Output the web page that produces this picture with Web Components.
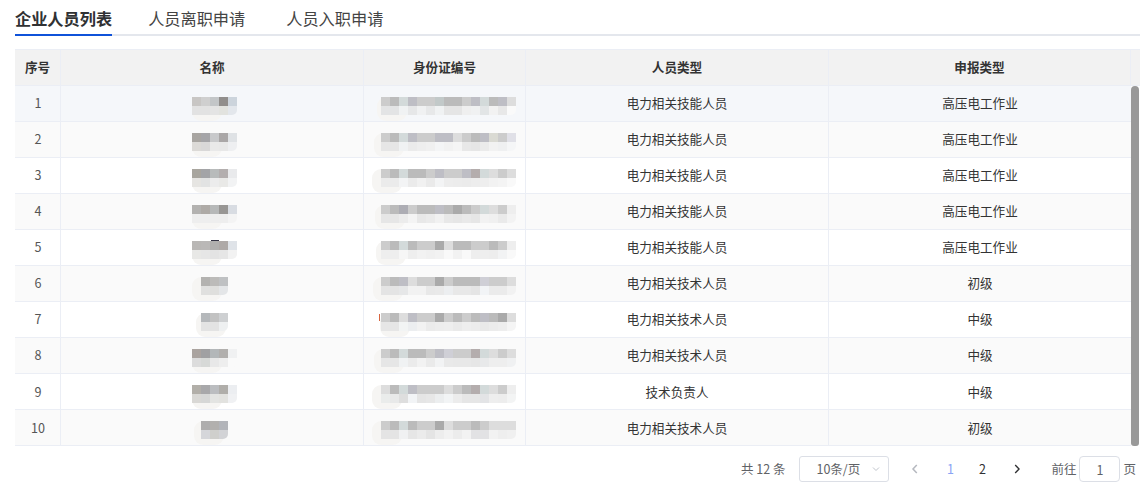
<!DOCTYPE html>
<html lang="zh">
<head>
<meta charset="utf-8">
<title>企业人员列表</title>
<style>
  html, body { margin: 0; background: #fff; }
  body {
    padding: 0 8px 0 15px;
    font-family: "Noto Sans CJK SC", "Liberation Sans", sans-serif;
    font-size: 12.6px;
    color: #333;
    overflow: hidden;
  }
</style>
</head>
<body>
<staff-tabs>
  <tab-item active>企业人员列表</tab-item>
  <tab-item>人员离职申请</tab-item>
  <tab-item>人员入职申请</tab-item>
</staff-tabs>
<staff-table></staff-table>
<staff-pager></staff-pager>

<script>
class TabItem extends HTMLElement {
    connectedCallback() {
        this.attachShadow({ mode: 'open' });
        this.shadowRoot.innerHTML = `
            <style>
                :host {
                    display: block;
                    height: 36px;
                    box-sizing: border-box;
                    padding-top: 6px;
                    font-size: 16.2px;
                    line-height: 24px;
                    color: #444;
                    border-bottom: 2px solid transparent;
                }
                :host([active]) {
                    font-weight: 700;
                    color: #303133;
                    border-bottom-color: #0f52d9;
                }
            </style>
            <slot></slot>
        `;
    }
}

class StaffTabs extends HTMLElement {
    connectedCallback() {
        this.attachShadow({ mode: 'open' });
        this.shadowRoot.innerHTML = `
            <style>
                :host {
                    display: flex;
                    gap: 36px;
                    height: 36px;
                    border-bottom: 2px solid #e4e7ed;
                    box-sizing: border-box;
                }
                ::slotted(tab-item:nth-child(3)) { margin-left: 5px; }
            </style>
            <slot></slot>
        `;
    }
}

// pixelated (redacted) block: two rows of 9px squares, with a pale halo behind
class BlurMask extends HTMLElement {
    connectedCallback() {
        const top = this.getAttribute('top').split(' ');
        const bottom = this.getAttribute('bottom').split(' ');
        const halo = this.getAttribute('halo') || 0;
        const speck = this.getAttribute('speck');
        const cells = list => list.map(c => `<i style="background:#${c}"></i>`).join('');
        let speckHtml = '';
        if (speck) {
            const [x, y, w, h, color] = speck.split(',');
            speckHtml = `<b style="left:${x}px;top:${y}px;width:${w}px;height:${h}px;background:#${color}"></b>`;
        }
        this.attachShadow({ mode: 'open' });
        this.shadowRoot.innerHTML = `
            <style>
                :host {
                    display: grid;
                    grid-template-rows: 9px 9px;
                    width: max-content;
                    position: relative;
                }
                .row { display: flex; position: relative; }
                i { display: block; width: 9px; height: 9px; }
                b { position: absolute; display: block; }
                .row:first-of-type i:last-child { border-top-right-radius: 5px; }
                .row:last-of-type i:last-child { border-bottom-right-radius: 5px; }
                .halo {
                    position: absolute;
                    top: 0;
                    bottom: 0;
                    left: -${halo}px;
                    width: 30px;
                    border-radius: 9px;
                    background: #f6f5f3;
                }
            </style>
            ${halo ? '<div class="halo"></div>' : ''}
            <div class="row">${cells(top)}</div>
            <div class="row">${cells(bottom)}</div>
            ${speckHtml}
        `;
    }
}

class StaffRow extends HTMLElement {
    connectedCallback() {
        this.attachShadow({ mode: 'open' });
        this.shadowRoot.innerHTML = `
            <style>
                :host {
                    display: grid;
                    grid-template-columns: 46px 303px 162px 303px 302px;
                    height: 36px;
                    box-sizing: border-box;
                    border-bottom: 1px solid #ebeef5;
                    background: var(--row-bg, #fff);
                    line-height: 33px;
                    text-align: center;
                    color: #333;
                }
                :host([striped]) { --row-bg: #fafafa; }
                :host([hover]) { --row-bg: #f5f7fa; }
                :host([low]) { line-height: 35px; }
                .c { border-right: 1px solid #ebeef5; min-width: 0; }
                .c:last-child { border-right: 0; }
                .no { color: #555; padding-left: 1px; box-sizing: border-box; }
                .mask { padding-top: 11px; box-sizing: border-box; display: flex; justify-content: center; }
                .name { padding-left: 5px; }
                .id { padding-left: 8px; }
            </style>
            <div class="c no">${this.getAttribute('no')}</div>
            <div class="c mask name"><slot name="name"></slot></div>
            <div class="c mask id"><slot name="id"></slot></div>
            <div class="c">${this.getAttribute('kind')}</div>
            <div class="c">${this.getAttribute('level')}</div>
        `;
    }
}

const KIND_SKILL = '电力相关技能人员';
const KIND_TECH = '电力相关技术人员';
const ROWS = [
    { kind: KIND_SKILL, level: '高压电工作业',
      nt: 'c8c6c4 cfcfcf c3c6c8 918e8c ccd4dc', nb: 'e2e2e2 e2e2e2 e4e4e4 e2e3df e3e7ec', nh: 0,
      it: 'ccc bbb cdd bbc ccc ccc bcc bbb bbb ccc bbc cdd bbb bbc ddd', ib: 'e3e4e5 e3e4e5 f0f2f3 e6e7e8 f0f1f2 e7e8e9 f0f2f3 e5e5e5 e5e5e5 efefef f0f1f2 e2e5e6 f2f2f2 e8e8e8 fafafa', ih: 4 },
    { kind: KIND_SKILL, level: '高压电工作业',
      nt: 'a8a5a1 a5a5a8 c8c9cb aaa7a7 dfe2e5', nb: 'dcdad7 d9d8d8 e9e9e9 e8e8e8 eeeff1', nh: 0,
      it: 'ccc bbb cdd bbc ccc ccc bbc bbc ddd ccc bbb bbc ddc ccc dde', ib: 'e6e6e6 e6e6e6 f0f2f3 ebebeb eeeeee f0f0f0 f4f5f6 f2f2f2 f5f5f5 e8e8e8 e6e6e6 ebebeb f2f2f2 eff0f1 f5f6f7', ih: 7 },
    { kind: KIND_SKILL, level: '高压电工作业',
      nt: 'a8a59e a3a4a7 b8bbbb b3aeae e9eaec', nb: 'e6e5e2 e2e3e3 ececec e9e9e7 f2f3f4', nh: 0,
      it: 'ccc bbb cdd bbb bbb ccc bbc ccc ccc bbc baa cdd ddd ccc ddd', ib: 'ebebeb ebebeb f3f4f5 ebebeb f1f1f1 eaeaea f3f4f5 ededed ececec ebebeb ededed eeeeee f2f2f2 f4f4f4 f9f9f9', ih: 9 },
    { kind: KIND_SKILL, level: '高压电工作业',
      nt: 'b3b2b0 aeaaa6 b6b8b8 989694 d8dce2', nb: 'eeeeee eeeeee eeeeee eeeeee f4f4f4', nh: 0,
      it: 'ccc bbb aab ccc bbb bbb bbc bbb aaa bbb ccc cdd ddd ccc eee', ib: 'e6e6e6 e6e6e6 ececec f4f4f4 e8e8e8 ebebeb f1f1f1 e8e8e8 e6e6e6 e9e9e9 e6e6e6 f2f2f2 f0f0f0 eaeaea f3f3f3', ih: 6 },
    { kind: KIND_SKILL, level: '高压电工作业',
      nt: 'b9b7b5 bab8b7 b0afae aea9a7 dfe3e8', nb: 'e8e8e6 e6e6e6 e3e3e3 e6e6e6 f2f2f2', nh: 0, ns: '19,-1,8,1,334',
      it: 'ccc bbb cdd bbb ccc ccc aaa ddd bbb bbb ccc ccc bbb ccc eee', ib: 'eeeeee eeeeee f6f6f6 eeeeee f2f2f2 f0f0f0 f2f2f2 f9f9f9 f2f2f2 f9f9f9 eeeeee eeeeee ededed f2f3f4 f9f9f9', ih: 5 },
    { kind: KIND_TECH, level: '初级',
      nt: 'b3b2b0 bcbbb9 bfc1c3', nb: 'e0e0df dfdfdd e4e6e8', nh: 9,
      it: 'ccc bbb bbc ddd ccc ccc aaa ccc bbb bbb bbb ccd ccc ccc ddd', ib: 'e4e4e4 e4e4e4 e6e7e8 f2f2f2 f2f2f2 e8e8e8 e9e9e9 eceef0 e8e8e8 e8e8e8 e5e5e5 f2f4f6 ebebeb ebebeb f2f2f2', ih: 8 },
    { kind: KIND_TECH, level: '中级',
      nt: 'b5b8bb c2c2c2 ced0d2', nb: 'e3e3e3 e3e3e3 eef0f1', nh: 5, is: '-2,1,1,7,d9653f',
      it: 'ccc bbb ddd bbc ccc ccc aaa ccc bbb ccc bbb bbc bbb aaa ddd', ib: 'e6e6e6 e6e6e6 f2f4f4 eceef0 f2f2f2 ebebeb ededed eeeeee eaeaea eeeeee ececec e9e9e9 ececec eeeeee f5f5f5', ih: 1 },
    { kind: KIND_TECH, level: '中级',
      nt: 'aaa39f a0a0a2 b3b7b9 b1afad f0f1f2', nb: 'dcdcdc d7d9d7 e8e8e8 eeeeee fafafa', nh: 0,
      it: 'ccc bbb cdd bbb bbb ccc bbc ccd ccc ccc baa cdd ddd ccc ddd', ib: 'e6e6e6 e6e6e6 f0f2f3 ebebeb f2f2f2 eaeaea f2f3f4 e9e9e9 e8e8e8 e8e8e8 e6e6e6 e8e9ea eeeeee eeeeee f0f1f2', ih: 7 },
    { kind: '技术负责人', level: '中级',
      nt: 'b2afa9 a8a8aa bbbdc0 b0aeaa eceef1', nb: 'd9d8d5 d6d7d6 e3e4e2 e2e2df f0f1f3', nh: 0,
      it: 'ddd bbb cdd bbc ccc ccc ccc ddd ccc bbb baa cdd ddd ccc eee', ib: 'eaeceb e8e9e9 dedede f2f4f6 e5e5e5 e7e7e7 eceeef f2f4f5 ececec e6e6e6 e6e6e6 e3e4e6 eeeeee ededed f3f4f4', ih: 9 },
    { kind: KIND_TECH, level: '初级',
      nt: 'aeadad b2b0ae b2b4b9', nb: 'd5d6da cfcfcc d2d3d6', nh: 7,
      it: 'ccc bbb cdd bbb ccc ccc aaa ddd ccc ccc bbb ccc ddd ddd ddd', ib: 'e4e4e4 e4e4e4 f0f1f2 e6e6e6 ebebeb e4e4e4 ededed f2f2f2 ececec f2f2f2 e2e2e4 e2e2e4 f2f2f2 eeeeee f0f0f0', ih: 9 },
];

class StaffTable extends HTMLElement {
    connectedCallback() {
        const rows = ROWS.map((r, i) => {
            const n = i + 1;
            const attr = n === 1 ? 'hover' : (n % 2 === 0 ? 'striped' : '');
            return `
                <staff-row no="${n}" kind="${r.kind}" level="${r.level}" ${attr} ${n > 8 ? 'low' : ''}>
                    <blur-mask slot="name" top="${r.nt}" bottom="${r.nb}" halo="${r.nh}" ${r.ns ? `speck="${r.ns}"` : ''}></blur-mask>
                    <blur-mask slot="id" top="${this.hex(r.it)}" bottom="${r.ib}" halo="${r.ih}" ${r.is ? `speck="${r.is}"` : ''}></blur-mask>
                </staff-row>`;
        }).join('');
        this.attachShadow({ mode: 'open' });
        this.shadowRoot.innerHTML = `
            <style>
                :host {
                    display: block;
                    width: 1125px;
                    margin-top: 13px;
                    border-top: 1px solid #ebeef5;
                    box-sizing: border-box;
                }
                .head {
                    display: grid;
                    grid-template-columns: 46px 303px 162px 303px 302px 9px;
                    height: 35px;
                    background: #f2f2f2;
                    border-bottom: 1px solid #ebeef5;
                    line-height: 33px;
                    text-align: center;
                    font-weight: 700;
                    color: #333;
                }
                .head div { border-right: 1px solid #ebeef5; }
                .head div:last-child { border-right: 0; }
                .body { display: flex; }
                .rows { width: 1116px; }
                .gutter { width: 9px; }
                .thumb { width: 8px; height: 100%; background: #999; border-radius: 4px 4px 3px 3px; }
            </style>
            <div class="head">
                <div>序号</div><div>名称</div><div>身份证编号</div><div>人员类型</div><div>申报类型</div><div></div>
            </div>
            <div class="body">
                <div class="rows">${rows}</div>
                <div class="gutter"><div class="thumb"></div></div>
            </div>
        `;
    }

    // short greys from the table above, with the tint toned down
    hex(list) {
        return list.split(' ').map(c => {
            const v = [...c].map(d => parseInt(d + d, 16));
            const avg = (v[0] + v[1] + v[2]) / 3;
            return v.map(x => Math.round(avg + (x - avg) * 0.4).toString(16).padStart(2, '0')).join('');
        }).join(' ');
    }
}

class StaffPager extends HTMLElement {
    connectedCallback() {
        const chevron = (d, color, w) => `<svg width="8" height="10" viewBox="0 0 8 10" fill="none" stroke="${color}" stroke-width="${w}"><path d="${d}"/></svg>`;
        this.attachShadow({ mode: 'open' });
        this.shadowRoot.innerHTML = `
            <style>
                :host {
                    display: flex;
                    align-items: center;
                    justify-content: flex-end;
                    width: 1121px;
                    height: 26px;
                    margin-top: 10px;
                    font-size: 12.5px;
                    color: #606266;
                }
                .box {
                    box-sizing: border-box;
                    height: 26px;
                    border: 1px solid #dcdfe6;
                    border-radius: 3px;
                    display: flex;
                    align-items: center;
                }
                span, .page, .jump { position: relative; top: -1px; }
                .box.jump { top: 0; border-radius: 4px; }
                .size span { top: -1px; }
                .size { width: 90px; margin: 0 7px 0 14px; padding: 0 8px 0 16px; justify-content: space-between; }
                .jump { width: 41px; margin: 0 3px; justify-content: center; color: #606266; }
                .nav { width: 38px; display: flex; justify-content: center; }
                .page { width: 32px; text-align: center; color: #303133; }
                .page.on { color: #8aa4f5; }
                .go { margin-left: 15px; }
            </style>
            <span>共 12 条</span>
            <div class="box size"><span>10条/页</span>${chevron('M1 3.5l3 3 3-3', '#c0c4cc', 1)}</div>
            <div class="nav">${chevron('M5.8 1L2 5l3.8 4', '#b5b8bf', 1.5)}</div>
            <div class="page on">1</div>
            <div class="page">2</div>
            <div class="nav">${chevron('M2.2 1L6 5 2.2 9', '#303133', 1.4)}</div>
            <span class="go">前往</span>
            <div class="box jump">1</div>
            <span>页</span>
        `;
    }
}

customElements.define('tab-item', TabItem);
customElements.define('staff-tabs', StaffTabs);
customElements.define('blur-mask', BlurMask);
customElements.define('staff-row', StaffRow);
customElements.define('staff-table', StaffTable);
customElements.define('staff-pager', StaffPager);
</script>
</body>
</html>
